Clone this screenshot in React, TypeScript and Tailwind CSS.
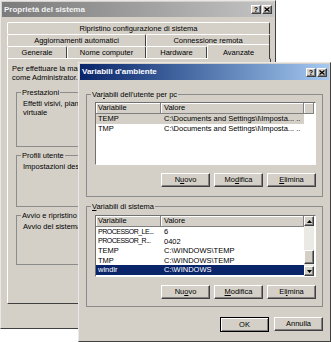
import React from 'react';

// classic Windows 3D edges
const raised =
  'border border-t-white border-l-white border-r-[#404040] border-b-[#404040] shadow-[inset_-1px_-1px_0_#808080]';

const CaptionButtons = () => (
  <div className="flex gap-[1px]">
    <div className={`w-[10px] h-[9px] bg-[#d4d0c8] ${raised} flex items-center justify-center text-[7px] font-bold leading-none text-black`}>
      ?
    </div>
    <div className={`w-[10px] h-[9px] bg-[#d4d0c8] ${raised} flex items-center justify-center`}>
      <svg width="6" height="5" viewBox="0 0 6 5">
        <path d="M0.5 0.5 L5.5 4.5 M5.5 0.5 L0.5 4.5" stroke="#000" strokeWidth="1.3" />
      </svg>
    </div>
  </div>
);

const Tab = ({ label, className }: { label: string; className: string }) => (
  <div
    className={`${className} h-[12px] flex items-center justify-center border-t border-l border-r border-t-white border-l-white border-r-[#404040] rounded-t-[2px] bg-[#d4d0c8] whitespace-nowrap`}
  >
    {label}
  </div>
);

const GroupText = ({ lines }: { lines: string[] }) => (
  <div className="pl-[6px] pt-[2px] whitespace-nowrap">
    {lines.map((l) => (
      <div key={l} className="leading-[9px]">
        {l}
      </div>
    ))}
  </div>
);

const Button = ({ children, isDefault }: { children: React.ReactNode; isDefault?: boolean }) => (
  <div
    className={
      isDefault
        ? 'w-[49px] h-[15px] bg-[#d4d0c8] border border-black shadow-[inset_1px_1px_0_#fff,inset_-1px_-1px_0_#808080] flex items-center justify-center'
        : `w-[49px] h-[14px] bg-[#d4d0c8] ${raised} flex items-center justify-center`
    }
  >
    {children}
  </div>
);

const HeaderCell = ({ label, className }: { label: string; className: string }) => (
  <div
    className={`${className} h-[11px] shrink-0 flex items-center bg-[#d4d0c8] border-r border-b border-r-[#808080] border-b-[#808080] shadow-[inset_1px_1px_0_#fff] whitespace-nowrap overflow-hidden`}
  >
    {label}
  </div>
);

const Arrow = ({ up }: { up?: boolean }) => (
  <div className={`h-[10px] bg-[#d4d0c8] ${raised} flex items-center justify-center`}>
    <svg width="5" height="3" viewBox="0 0 5 3">
      <path d={up ? 'M2.5 0 L5 3 L0 3 Z' : 'M0 0 L5 0 L2.5 3 Z'} fill="#000" />
    </svg>
  </div>
);

type Row = [string, string];

const userRows: Row[] = [
  ['TEMP', 'C:\\Documents and Settings\\l\\Imposta... ..'],
  ['TMP', 'C:\\Documents and Settings\\l\\Imposta... ..'],
];

const systemRows: Row[] = [
  ['PROCESSOR_LE...', '6'],
  ['PROCESSOR_R...', '0402'],
  ['TEMP', 'C:\\WINDOWS\\TEMP'],
  ['TMP', 'C:\\WINDOWS\\TEMP'],
  ['windir', 'C:\\WINDOWS'],
];

const ListRows = ({ rows, selected, active }: { rows: Row[]; selected: number; active: boolean }) => (
  <div className="flex flex-col">
    {rows.map(([name, value], i) => {
      const sel = i === selected;
      const bg = sel ? (active ? 'bg-[#0a246a] text-white' : 'bg-[#d4d0c8]') : '';
      // long, truncated names are squeezed a little (Tahoma caps are narrower)
      const squeeze = name.endsWith('...') ? 'text-[7px] tracking-[-0.5px]' : '';
      return (
        <div key={name + i} className={`h-[9.5px] w-[208px] flex items-center whitespace-nowrap overflow-hidden ${bg}`}>
          <div className={`w-[65px] shrink-0 pl-[2px] ${squeeze}`}>{name}</div>
          <div className="pl-[3px]">{value}</div>
        </div>
      );
    })}
  </div>
);

const Legend = ({ children }: { children: React.ReactNode }) => (
  <legend className="ml-[4px] px-[1px] leading-[9px]">{children}</legend>
);

export default function App() {
  return (
    <div className="relative w-[331px] h-[342px] bg-white overflow-hidden text-[7.5px] text-black font-['Liberation_Sans',Arial,sans-serif]">
      {/* Proprietà del sistema (inactive, behind) */}
      <div className="absolute left-0 top-0 w-[276px] h-[329px] bg-[#d4d0c8] border border-t-[#e8e8e8] border-l-[#e8e8e8] border-r-[#404040] border-b-[#404040] p-[1px] flex flex-col">
        <div className="h-[15px] shrink-0 flex items-center justify-between pl-[2px] pr-[2px] bg-gradient-to-r from-[#7b7b7b] to-[#c4c4c4]">
          <span className="text-[8px] font-bold text-[#f2f2f2]">Proprietà del sistema</span>
          <CaptionButtons />
        </div>

        <div className="mt-[5px] ml-[5px] w-[264px] flex flex-col">
          <div className="flex">
            <Tab label="Ripristino configurazione di sistema" className="w-[263px]" />
          </div>
          <div className="flex">
            <Tab label="Aggiornamenti automatici" className="w-[139px]" />
            <Tab label="Connessione remota" className="w-[124px]" />
          </div>
          <div className="flex items-end h-[12px]">
            <Tab label="Generale" className="w-[60px]" />
            <Tab label="Nome computer" className="w-[79px]" />
            <Tab label="Hardware" className="w-[61px]" />
            <div className="w-[63px] h-[15px] -mb-[1px] relative z-10 flex justify-center pt-[2px] border-t border-l border-r border-t-white border-l-white border-r-[#404040] rounded-t-[2px] bg-[#d4d0c8]">
              Avanzate
            </div>
          </div>

          <div className="h-[246px] border border-t-white border-l-white border-r-[#404040] border-b-[#404040] pl-[4px] pr-[4px] pt-[5px] flex flex-col">
            <div className="whitespace-nowrap leading-[9px]">
              <div>Per effettuare la maggior parte delle modifiche</div>
              <div>come Administrator.</div>
            </div>
            <fieldset className="ml-[4px] mt-[6px] h-[59px] border border-[#8c8c8c]">
              <Legend>Prestazioni</Legend>
              <GroupText lines={['Effetti visivi, pianificazione', 'virtuale']} />
            </fieldset>
            <fieldset className="ml-[4px] mt-[4px] h-[56px] border border-[#8c8c8c]">
              <Legend>Profili utente</Legend>
              <GroupText lines={['Impostazioni desktop']} />
            </fieldset>
            <fieldset className="ml-[4px] mt-[4px] h-[54px] border border-[#8c8c8c]">
              <Legend>Avvio e ripristino</Legend>
              <GroupText lines={['Avvio del sistema, errore']} />
            </fieldset>
          </div>
        </div>
      </div>

      {/* Variabili d'ambiente (active, front) */}
      <div className="absolute left-[78px] top-[62px] w-[253px] h-[280px] bg-[#d4d0c8] border border-t-[#e8e8e8] border-l-[#e8e8e8] border-r-[#404040] border-b-[#404040] p-[1px] flex flex-col z-20">
        <div className="h-[16px] shrink-0 flex items-center justify-between pl-[2px] pr-[2px] bg-gradient-to-r from-[#0a246a] to-[#a6caf0]">
          <span className="text-[8px] font-bold text-white">Variabili d'ambiente</span>
          <CaptionButtons />
        </div>

        <div className="flex flex-col px-[6px]">
          <fieldset className="mt-[10px] h-[107px] border border-[#8c8c8c]">
            <Legend>
              Var<span className="underline">i</span>abili dell'utente per pc
            </Legend>
            <div className="pl-[8px] pr-[6px] pt-[3px]">
              <div className="h-[63px] bg-white border border-t-[#707070] border-l-[#707070] border-r-white border-b-white flex flex-col">
                <div className="flex">
                  <HeaderCell label="Variabile" className="w-[65px] pl-[2px]" />
                  <HeaderCell label="Valore" className="w-[143px] pl-[3px]" />
                  <HeaderCell label="" className="w-[10px]" />
                </div>
                <ListRows rows={userRows} selected={0} active={false} />
              </div>
              <div className="mt-[8px] flex justify-end gap-[4px]">
                <Button>
                  N<span className="underline">u</span>ovo
                </Button>
                <Button>
                  Mo<span className="underline">d</span>ifica
                </Button>
                <Button>
                  <span className="underline">E</span>limina
                </Button>
              </div>
            </div>
          </fieldset>

          <fieldset className="mt-[5px] h-[105px] border border-[#8c8c8c]">
            <Legend>
              <span className="underline">V</span>ariabili di sistema
            </Legend>
            <div className="pl-[8px] pr-[6px] pt-[4px]">
              <div className="h-[62px] bg-white border border-t-[#707070] border-l-[#707070] border-r-white border-b-white flex">
                <div className="flex flex-col w-[208px]">
                  <div className="flex">
                    <HeaderCell label="Variabile" className="w-[65px] pl-[2px]" />
                    <HeaderCell label="Valore" className="w-[143px] pl-[3px]" />
                  </div>
                  <ListRows rows={systemRows} selected={4} active />
                </div>
                <div className="w-[10px] flex flex-col">
                  <Arrow up />
                  <div className="flex-1 bg-[#ebe9e4]" />
                  <div className={`h-[14px] bg-[#d4d0c8] ${raised}`} />
                  <div className="h-[2px] bg-[#ebe9e4]" />
                  <Arrow />
                </div>
              </div>
              <div className="mt-[8px] flex justify-end gap-[4px]">
                <Button>
                  Nu<span className="underline">o</span>vo
                </Button>
                <Button>
                  <span className="underline">M</span>odifica
                </Button>
                <Button>
                  El<span className="underline">i</span>mina
                </Button>
              </div>
            </div>
          </fieldset>

          <div className="mt-[10px] flex justify-end gap-[5px]">
            <Button isDefault>OK</Button>
            <Button>Annulla</Button>
          </div>
        </div>
      </div>
    </div>
  );
}
